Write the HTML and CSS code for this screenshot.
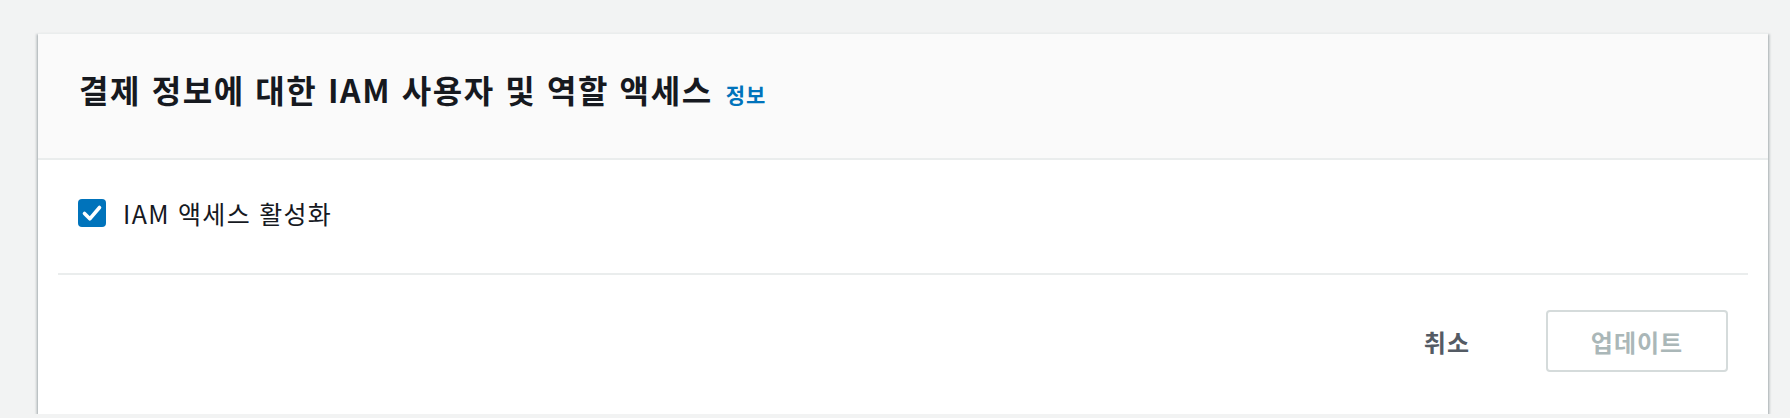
FILE: index.html
```html
<!DOCTYPE html>
<html lang="ko">
<head>
<meta charset="utf-8">
<title>IAM 액세스</title>
<link rel="stylesheet" href="styles.css">
</head>
<body>
<div class="page">
  <section class="card">
    <header class="card-header">
      <h2 class="card-title">결제 정보에 대한 IAM 사용자 및 역할 액세스</h2>
      <a class="info-link" href="#">정보</a>
    </header>
    <div class="card-body">
      <label class="checkbox-row">
        <span class="checkbox">
          <svg viewBox="0 0 28 28" width="28" height="28" aria-hidden="true">
            <path d="M6.5 14.5 L11.8 19.8 L21.5 8.5" fill="none" stroke="#fff" stroke-width="3.6" stroke-linecap="round" stroke-linejoin="round"/>
          </svg>
        </span>
        <span class="checkbox-label">IAM 액세스 활성화</span>
      </label>
    </div>
    <div class="divider"></div>
    <footer class="card-footer">
      <button class="btn btn-link" type="button">취소</button>
      <button class="btn btn-primary-disabled" type="button" disabled>업데이트</button>
    </footer>
  </section>
</div>
</body>
</html>
```

FILE: styles.css
```css
* { box-sizing: border-box; }

html, body {
  margin: 0;
  padding: 0;
  background: #f2f3f3;
  font-family: "Noto Sans CJK KR", "Noto Sans", sans-serif;
  color: #16191f;
}

.page {
  padding: 33px 22px 0 38px;
}

.card {
  background: #ffffff;
  height: 381px;
  box-shadow: 0 2px 2px 0 rgba(0, 28, 36, 0.3),
              2px 1px 2px 0 rgba(0, 28, 36, 0.15),
              -2px 1px 2px 0 rgba(0, 28, 36, 0.15);
  border-top: 1px solid #eaeded;
}

.card-header {
  height: 126px;
  background: #fafafa;
  border-bottom: 2px solid #eaeded;
  display: flex;
  align-items: baseline;
  padding: 32px 40px 0 41px;
  gap: 13px;
}

.card-title {
  margin: 0;
  font-size: 32px;
  line-height: 46px;
  font-weight: 700;
  color: #16191f;
  letter-spacing: 1.6px;
}

.info-link {
  font-size: 21px;
  font-weight: 700;
  color: #0073bb;
  text-decoration: none;
  letter-spacing: 1px;
}

.card-body {
  padding: 39px 40px 46px 40px;
}

.checkbox-row {
  display: flex;
  align-items: center;
  gap: 17px;
  height: 28px;
}

.checkbox {
  width: 28px;
  height: 28px;
  border-radius: 4px;
  background: #0073bb;
  display: flex;
  align-items: center;
  justify-content: center;
  flex: none;
}

.checkbox svg { display: block; }

.checkbox-label {
  font-size: 25px;
  line-height: 28px;
  color: #16191f;
  letter-spacing: 1.3px;
}

.divider {
  height: 2px;
  margin: 0 20px;
  background: #eaeded;
}

.card-footer {
  display: flex;
  justify-content: flex-end;
  align-items: center;
  gap: 56px;
  padding: 35px 40px 0 40px;
}

.btn {
  font-family: inherit;
  font-size: 24px;
  font-weight: 700;
  background: none;
  border: none;
  cursor: pointer;
  letter-spacing: 1px;
}

.btn-link {
  color: #545b64;
  padding: 0 20px;
  height: 62px;
}

.btn-primary-disabled {
  width: 182px;
  height: 62px;
  border: 2px solid #d5dbdb;
  border-radius: 4px;
  color: #aab7b8;
  background: #ffffff;
  cursor: default;
}
```
